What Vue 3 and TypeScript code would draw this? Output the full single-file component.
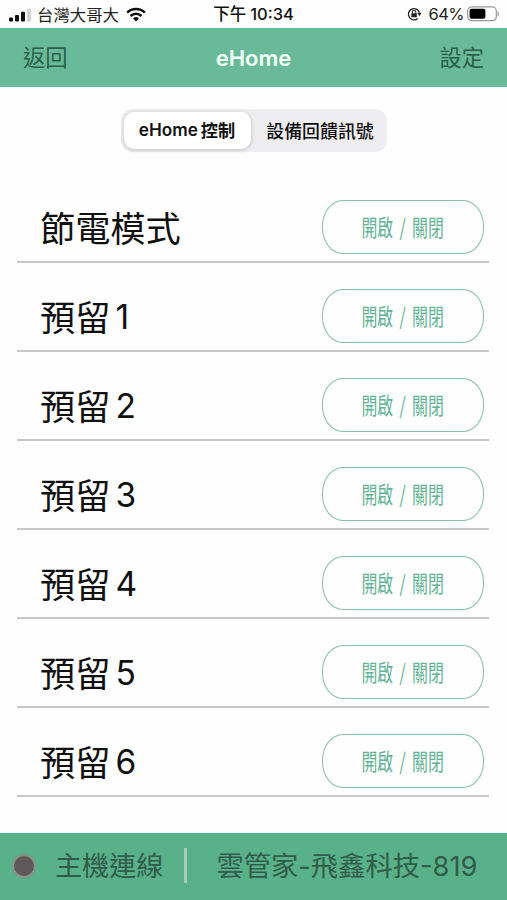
<script setup lang="ts">
import { ref } from 'vue'

interface Device {
  name: string
  index?: number
}

const devices: Device[] = [
  { name: '節電模式' },
  { name: '預留', index: 1 },
  { name: '預留', index: 2 },
  { name: '預留', index: 3 },
  { name: '預留', index: 4 },
  { name: '預留', index: 5 },
  { name: '預留', index: 6 },
]

const activeTab = ref<'control' | 'feedback'>('control')
</script>

<template>
  <div class="screen">
    <div class="status">
      <div class="status-left">
        <svg class="signal" width="23" height="14" viewBox="0 0 23 14">
          <rect x="0" y="9.4" width="4" height="4" rx="1" fill="#111" />
          <rect x="6" y="7" width="4" height="6.4" rx="1" fill="#111" />
          <rect x="12" y="3.8" width="4" height="9.6" rx="1" fill="#111" />
          <rect x="18" y="0.6" width="4" height="12.8" rx="1" fill="#d2d2d2" />
        </svg>
        <span class="carrier">台灣大哥大</span>
        <svg class="wifi" width="20" height="15" viewBox="0 0 20 15">
          <g fill="none" stroke="#111" stroke-width="2.6">
            <path d="M1.2 5.6 A12.6 12.6 0 0 1 18.8 5.6" />
            <path d="M4.5 9 A7.9 7.9 0 0 1 15.5 9" />
          </g>
          <path d="M7 11.4 A4.3 4.3 0 0 1 13 11.4 L10 14.4 Z" fill="#111" />
        </svg>
      </div>
      <div class="clock"><span>下午</span><span>10:34</span></div>
      <div class="status-right">
        <svg width="15" height="14" viewBox="0 0 15 14">
          <path d="M12.4 5.6 A5.6 5.6 0 1 0 10.8 11.4" fill="none" stroke="#222" stroke-width="1.3" />
          <path d="M10.2 5.8 H14.6 L12.5 9.2 Z" fill="#222" />
          <rect x="4.4" y="6.3" width="5.4" height="4" rx=".5" fill="#222" />
          <path d="M5.4 6.5 V5.2 A1.7 1.7 0 0 1 8.8 5.2 V6.5" fill="none" stroke="#222" stroke-width="1.1" />
        </svg>
        <span class="percent">64%</span>
        <svg width="33" height="16" viewBox="0 0 33 16">
          <rect x=".7" y=".9" width="28.6" height="13.8" rx="4" fill="#fff" stroke="#999" stroke-width="1.2" />
          <rect x="2.6" y="2.8" width="15.8" height="10" rx="2" fill="#000" />
          <path d="M30.8 5.5 Q32.6 7.8 30.8 10.1 Z" fill="#999" stroke="#999" stroke-width=".5" />
        </svg>
      </div>
    </div>

    <header class="nav">
      <span class="nav-action">返回</span>
      <h1 class="nav-title">eHome</h1>
      <span class="nav-action">設定</span>
    </header>

    <div class="tabs">
      <button class="tab" :class="{ active: activeTab === 'control' }" @click="activeTab = 'control'">
        <span>eHome</span><span class="tab-suffix">控制</span>
      </button>
      <button class="tab" :class="{ active: activeTab === 'feedback' }" @click="activeTab = 'feedback'">
        設備回饋訊號
      </button>
    </div>

    <main class="list">
      <div v-for="(device, i) in devices" :key="i" class="row">
        <div class="label">
          <span class="name">{{ device.name }}</span><span v-if="device.index" class="number">{{ device.index }}</span>
        </div>
        <button class="toggle"><span class="toggle-text">開啟 / 關閉</span></button>
      </div>
    </main>

    <footer class="footer">
      <span class="dot"></span>
      <span class="host">主機連線</span>
      <span class="divider"></span>
      <span class="site">雲管家-飛鑫科技-819</span>
    </footer>
  </div>
</template>

<style>
body {
  background: #fdfdfd;
}
</style>

<style scoped>
.screen {
  width: 507px;
  height: 900px;
  display: flex;
  flex-direction: column;
  overflow: hidden;
  background: #fefefe;
  color: #111;
  font-family: Inter, "Noto Sans CJK TC", sans-serif;
}
button {
  margin: 0;
  padding: 0;
  border: 0;
  background: none;
  font-family: inherit;
  color: inherit;
  white-space: nowrap;
}
.status {
  height: 28px;
  flex: none;
  display: grid;
  grid-template-columns: 1fr auto 1fr;
  align-items: center;
  padding: 0 7px 0 9px;
  line-height: 28px;
}
.status-left,
.status-right,
.clock {
  display: flex;
  align-items: center;
}
.signal {
  margin-top: 1px;
}
.carrier {
  margin: 0 7px 0 5px;
  padding-top: 2px;
  line-height: 26px;
  font-size: 16.4px;
  color: #222;
}
.clock {
  gap: 4px;
  margin-right: 2px;
  padding-top: 1px;
  line-height: 27px;
  font-size: 16.5px;
  font-weight: 500;
}
.status-right {
  justify-content: flex-end;
}
.status-right svg {
  flex: none;
}
.percent {
  margin: 0 3px 0 6px;
  padding-top: 1px;
  line-height: 27px;
  font-size: 16.5px;
  letter-spacing: -0.5px;
  color: #222;
}
.nav {
  height: 59px;
  flex: none;
  display: grid;
  grid-template-columns: 1fr auto 1fr;
  align-items: center;
  padding: 0 23px;
  background: #68ba98;
}
.nav-action {
  font-size: 22.3px;
  line-height: 59px;
  color: #2c6049;
}
.nav-action:last-child {
  text-align: right;
}
.nav-title {
  margin: 0;
  font-size: 22px;
  font-weight: 600;
  color: #f2fff9;
}
.tabs {
  align-self: flex-start;
  flex: none;
  display: flex;
  width: 266px;
  height: 43px;
  box-sizing: border-box;
  margin: 22px 0 0 121px;
  padding: 3px;
  border-radius: 12px;
  background: #eeeef0;
}
.tab {
  flex: 1;
  display: flex;
  align-items: center;
  justify-content: center;
  padding: 0 0 2px 5px;
  border-radius: 10px;
  font-size: 17.9px;
  font-weight: 500;
}
.tab.active {
  flex: 0 0 127px;
  box-sizing: border-box;
  padding: 0 1px 2px 0;
  background: #fff;
  font-weight: 600;
  font-size: 17.2px;
  box-shadow: 0 1px 4px rgba(0, 0, 0, 0.2);
}
.tab-suffix {
  margin-left: 3px;
}
.list {
  flex: 1;
  padding: 22px 18px 0 17px;
}
.row {
  height: 89px;
  box-sizing: border-box;
  display: flex;
  align-items: flex-end;
  justify-content: space-between;
  padding: 0 5px 7px 23px;
  border-bottom: 2px solid #c8c8c8;
}
.label {
  display: flex;
  align-items: flex-start;
  height: 54px;
  line-height: 54px;
}
.name {
  padding-top: 2px;
  font-size: 35.2px;
}
.number {
  margin-left: 5px;
  padding-top: 1px;
  font-size: 33.5px;
}
.toggle {
  width: 162px;
  height: 54px;
  box-sizing: border-box;
  display: flex;
  align-items: center;
  justify-content: center;
  padding-bottom: 2px;
  border: 1.5px solid #85bfa8;
  border-radius: 21px / 26px;
  color: #62b394;
}
.toggle-text {
  font-family: "Noto Sans CJK TC", sans-serif;
  font-size: 23px;
  line-height: 30px;
  word-spacing: 4px;
  transform: scaleX(0.69);
}
.footer {
  height: 67px;
  flex: none;
  box-sizing: border-box;
  display: flex;
  align-items: center;
  padding: 0 0 2px 12px;
  background: #59b189;
  color: #315c49;
  line-height: 65px;
  white-space: nowrap;
}
.dot {
  width: 24px;
  height: 24px;
  box-sizing: border-box;
  border: 2px solid #8a9388;
  border-radius: 50%;
  background: #5e5a5b;
}
.host {
  margin-left: 19px;
  padding-top: 1px;
  font-size: 27.1px;
}
.divider {
  width: 3px;
  height: 35px;
  margin: 0 29px 0 21px;
  background: #a9cdb8;
}
.site {
  padding-top: 1px;
  font-size: 27.3px;
}
</style>
